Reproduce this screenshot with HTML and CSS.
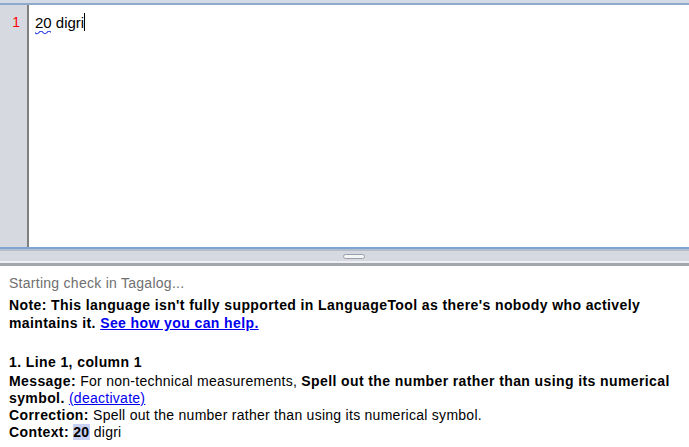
FILE: index.html
```html
<!DOCTYPE html>
<html>
<head>
<meta charset="utf-8">
<link rel="stylesheet" href="styles.css">
</head>
<body>
<div class="app">
  <div class="topbar"></div>
  <div class="editor">
    <div class="gutter"><span class="lineno">1</span></div>
    <div class="textarea">
      <span class="err">20<svg class="squiggle" width="16" height="4" viewBox="0 0 16 4"><path d="M0 1.5 Q2 4 4 1.5 T8 1.5 T12 1.5 T16 1.5" fill="none" stroke="#2a3fe0" stroke-width="1.2"/></svg></span> digri<span class="caret"></span>
    </div>
  </div>
  <div class="splitter">
    <div class="split-blue"></div>
    <div class="split-band"><div class="grip"></div></div>
    <div class="split-bottom"></div>
  </div>
  <div class="results">
    <div class="status">Starting check in Tagalog...</div>
    <div class="note"><b>Note: This language isn't fully supported in LanguageTool as there's nobody who actively maintains it. <a href="#" class="link">See how you can help.</a></b></div>
    <div class="match">
      <div class="title"><b>1. Line 1, column 1</b></div>
      <div><b>Message:</b> For non-technical measurements, <b>Spell out the number rather than using its numerical symbol.</b> <a href="#" class="plain-link">(deactivate)</a></div>
      <div><b>Correction:</b> Spell out the number rather than using its numerical symbol.</div>
      <div><b>Context:</b> <b class="hl">20</b> digri</div>
    </div>
  </div>
</div>
</body>
</html>
```
FILE: styles.css
```css
html, body {
  margin: 0;
  padding: 0;
  background: #ffffff;
}
.app {
  width: 689px;
  height: 447px;
  display: flex;
  flex-direction: column;
  overflow: hidden;
  font-family: "Liberation Sans", Arial, sans-serif;
}
.topbar {
  height: 3px;
  background: #d3dbe6;
  border-bottom: 2px solid #8ea9c9;
}
.editor {
  height: 242px;
  display: flex;
}
.gutter {
  width: 27px;
  background: #d6d9df;
  border-right: 2px solid #7f7f7f;
  text-align: right;
  box-sizing: content-box;
}
.lineno {
  display: block;
  color: #ff0000;
  font-size: 14px;
  line-height: 17px;
  padding-top: 9px;
  padding-right: 7px;
}
.textarea {
  flex: 1;
  padding: 9px 0 0 6px;
  font-size: 15px;
  line-height: 17px;
  color: #000;
  display: flex;
  align-items: flex-start;
  white-space: pre;
}
.err {
  position: relative;
}
.squiggle {
  position: absolute;
  left: 0;
  bottom: -4px;
}
.caret {
  display: inline-block;
  width: 1px;
  height: 18px;
  background: #000;
  margin-top: -1px;
}
.splitter {
  height: 19px;
  display: flex;
  flex-direction: column;
}
.split-blue {
  height: 2px;
  background: #7ea4d3;
  border-bottom: 2px solid #b5bfcc;
}
.split-band {
  height: 10px;
  background: #d6d9df;
  display: flex;
  justify-content: center;
  align-items: center;
}
.grip {
  width: 20px;
  height: 3px;
  border: 1px solid #9aa0a8;
  border-radius: 3px;
  background: #f4f5f7;
  margin-left: 19px;
}
.split-bottom {
  height: 2px;
  background: #eef0f3;
  border-bottom: 3px solid #a2a6ad;
}
.results {
  padding: 9px 9px 0 9px;
  font-size: 14px;
  letter-spacing: 0.27px;
  line-height: 17px;
  color: #000;
}
.results b {
  letter-spacing: 0.4px;
}
.status {
  color: #6f6f6f;
  margin-bottom: 4px;
}
.note {
  line-height: 18px;
  margin-bottom: 22px;
}
.title {
  margin-bottom: 2px;
}
.link {
  color: #0000ee;
  text-decoration: underline;
}
.plain-link {
  color: #0000ee;
  font-weight: normal;
}
.hl {
  background: #c8d0f4;
}
```
